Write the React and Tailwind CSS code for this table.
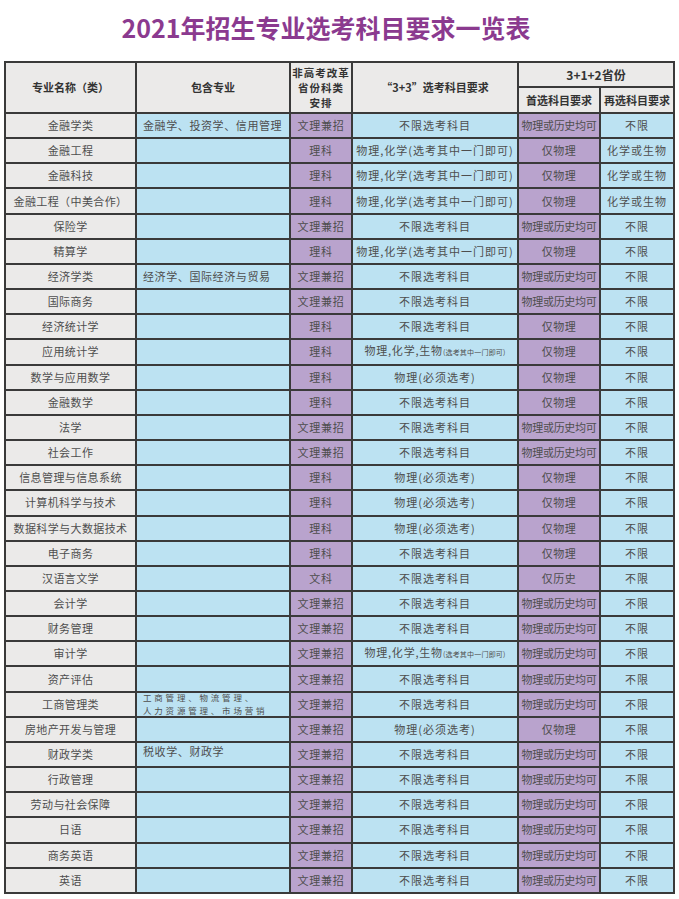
import React from "react";

const A = "不限选考科目";
const B = "物理,化学(选考其中一门即可)";
const C = "C";
const D = "物理(必须选考)";
const W = "文理兼招";
const L = "理科";
const E = "物理或历史均可";
const P = "仅物理";
const N = "不限";
const H = "化学或生物";

const rows = [
  ["金融学类", "金融学、投资学、信用管理", W, A, E, N],
  ["金融工程", "", L, B, P, H],
  ["金融科技", "", L, B, P, H],
  ["金融工程（中美合作）", "", L, B, P, H],
  ["保险学", "", W, A, E, N],
  ["精算学", "", L, B, P, N],
  ["经济学类", "经济学、国际经济与贸易", W, A, E, N],
  ["国际商务", "", W, A, E, N],
  ["经济统计学", "", L, A, P, N],
  ["应用统计学", "", L, C, P, N],
  ["数学与应用数学", "", L, D, P, N],
  ["金融数学", "", L, A, P, N],
  ["法学", "", W, A, E, N],
  ["社会工作", "", W, A, E, N],
  ["信息管理与信息系统", "", L, D, P, N],
  ["计算机科学与技术", "", L, D, P, N],
  ["数据科学与大数据技术", "", L, D, P, N],
  ["电子商务", "", L, A, P, N],
  ["汉语言文学", "", "文科", A, "仅历史", N],
  ["会计学", "", W, A, E, N],
  ["财务管理", "", W, A, E, N],
  ["审计学", "", W, C, E, N],
  ["资产评估", "", W, A, E, N],
  ["工商管理类", "TWO", W, A, E, N],
  ["房地产开发与管理", "", W, D, P, N],
  ["财政学类", "税收学、财政学", W, A, E, N],
  ["行政管理", "", W, A, E, N],
  ["劳动与社会保障", "", W, A, E, N],
  ["日语", "", W, A, E, N],
  ["商务英语", "", W, A, E, N],
  ["英语", "", W, A, E, N],
];

const gray = "bg-[#ebeae9]";
const blue = "bg-[#bce2f2]";
const purple = "bg-[#b9a3cd]";

function Req({ v }) {
  if (v === C) {
    return (
      <span className="tracking-[0.8px] whitespace-nowrap">
        物理,化学,生物<span className="text-[7px] tracking-[0.2px]">(选考其中一门即可)</span>
      </span>
    );
  }
  return <span className="tracking-[1px] whitespace-nowrap">{v}</span>;
}

export default function App() {
  return (
    <div className="w-[679px] h-[899px] bg-white font-['Noto_Sans_CJK_SC','Noto_Sans',sans-serif] text-[#4e4e4e] overflow-hidden">
      <div className="h-[61px] pt-[10px] pr-[27px] text-center text-[25px] leading-[34px] font-bold text-[#8b3a8f]">
        2021年招生专业选考科目要求一览表
      </div>
      <div className="ml-[4px] w-[671px] bg-[#3a3a3a] p-[2px] grid gap-[2px] grid-cols-[129px_152px_60px_164px_80px_72px] grid-rows-[23px_24px_repeat(31,23.16px)] text-[11px] leading-[13px]">
        <div className={`${gray} row-span-2 flex items-center justify-center font-bold text-[#333]`}>专业名称（类）</div>
        <div className={`${gray} row-span-2 flex items-center justify-center font-bold text-[#333]`}>包含专业</div>
        <div className={`${gray} row-span-2 flex flex-col items-center justify-center font-bold text-[#333] text-[10.5px] leading-[15.3px] tracking-[1px]`}>
          <span>非高考改革</span>
          <span>省份科类</span>
          <span>安排</span>
        </div>
        <div className={`${gray} row-span-2 flex items-center justify-center font-bold text-[#333]`}>“3+3”选考科目要求</div>
        <div className={`${gray} col-span-2 flex items-center justify-center font-bold text-[#333] text-[12px]`}>3+1+2省份</div>
        <div className={`${gray} flex items-center justify-center font-bold text-[#333] whitespace-nowrap`}>首选科目要求</div>
        <div className={`${gray} flex items-center justify-center font-bold text-[#333] whitespace-nowrap`}>再选科目要求</div>
        {rows.map((r, i) => (
          <React.Fragment key={i}>
            <div className={`${gray} flex items-center justify-center tracking-[0.4px] whitespace-nowrap`}>{r[0]}</div>
            <div className={`${blue} flex items-center pl-[6px] tracking-[0.6px] whitespace-nowrap`}>
              {r[1] === "TWO" ? (
                <div className="flex flex-col text-[8.5px] leading-[12.2px] tracking-[2.8px] pb-[1px]">
                  <span>工商管理、物流管理、</span>
                  <span>人力资源管理、市场营销</span>
                </div>
              ) : r[1] === "税收学、财政学" ? (
                <span className="pb-[6px]">{r[1]}</span>
              ) : (
                r[1]
              )}
            </div>
            <div className={`${purple} flex items-center justify-center tracking-[0.8px]`}>{r[2]}</div>
            <div className={`${blue} flex items-center justify-center`}><Req v={r[3]} /></div>
            <div className={`${purple} flex items-center justify-center whitespace-nowrap ${r[4] === E ? "tracking-[-0.3px]" : "tracking-[0.5px]"}`}>{r[4]}</div>
            <div className={`${blue} flex items-center justify-center tracking-[1px] whitespace-nowrap`}>{r[5]}</div>
          </React.Fragment>
        ))}
      </div>
    </div>
  );
}
